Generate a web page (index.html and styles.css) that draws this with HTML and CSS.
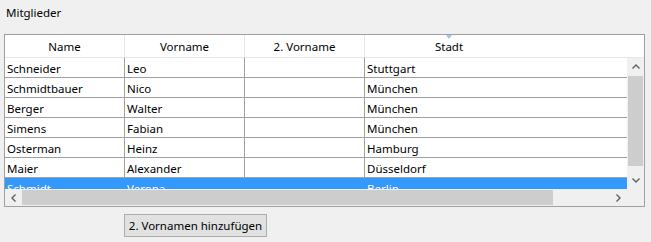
FILE: index.html
```html
<!DOCTYPE html>
<html lang="de">
<head>
    <meta charset="UTF-8">
    <title>Mitglieder</title>
    <link rel="stylesheet" href="styles.css">
</head>
<body>
    <div class="group">
        <div class="title">Mitglieder</div>
        <div class="grid-frame">
            <div class="header">
                <div class="hcell">Name</div>
                <div class="hcell">Vorname</div>
                <div class="hcell">2. Vorname</div>
                <div class="hcell last"><span class="sort-label"><span class="sort"></span>Stadt</span></div>
            </div>
            <div class="body-area">
                <div class="rows">
                    <div class="row"><div class="cell">Schneider</div><div class="cell">Leo</div><div class="cell"></div><div class="cell last">Stuttgart</div></div>
                    <div class="row"><div class="cell">Schmidtbauer</div><div class="cell">Nico</div><div class="cell"></div><div class="cell last">München</div></div>
                    <div class="row"><div class="cell">Berger</div><div class="cell">Walter</div><div class="cell"></div><div class="cell last">München</div></div>
                    <div class="row"><div class="cell">Simens</div><div class="cell">Fabian</div><div class="cell"></div><div class="cell last">München</div></div>
                    <div class="row"><div class="cell">Osterman</div><div class="cell">Heinz</div><div class="cell"></div><div class="cell last">Hamburg</div></div>
                    <div class="row"><div class="cell">Maier</div><div class="cell">Alexander</div><div class="cell"></div><div class="cell last">Düsseldorf</div></div>
                    <div class="row selected"><div class="cell">Schmidt</div><div class="cell">Verona</div><div class="cell"></div><div class="cell last">Berlin</div></div>
                </div>
                <div class="vscroll">
                    <div class="arrow-v">
                        <svg width="8" height="5" viewBox="0 0 8 5"><path d="M0.5 4.5 L4 1 L7.5 4.5" fill="none" stroke="#606060" stroke-width="1.4"/></svg>
                    </div>
                    <div class="vthumb"></div>
                    <div class="vspace"></div>
                    <div class="arrow-v">
                        <svg width="8" height="5" viewBox="0 0 8 5"><path d="M0.5 0.5 L4 4 L7.5 0.5" fill="none" stroke="#606060" stroke-width="1.4"/></svg>
                    </div>
                </div>
            </div>
            <div class="hbar">
                <div class="hscroll">
                    <div class="arrow-h">
                        <svg width="5" height="8" viewBox="0 0 5 8"><path d="M4.5 0.5 L1 4 L4.5 7.5" fill="none" stroke="#606060" stroke-width="1.4"/></svg>
                    </div>
                    <div class="hthumb"></div>
                    <div class="hspace"></div>
                    <div class="arrow-h">
                        <svg width="5" height="8" viewBox="0 0 5 8"><path d="M0.5 0.5 L4 4 L0.5 7.5" fill="none" stroke="#606060" stroke-width="1.4"/></svg>
                    </div>
                </div>
                <div class="corner"></div>
            </div>
        </div>
        <div class="actions">
            <button class="add-btn">2. Vornamen hinzufügen</button>
        </div>
    </div>
</body>
</html>
```

FILE: styles.css
```css
body {
    margin: 0;
    background-color: #f0f0f0;
    font-family: "Noto Sans", "Open Sans", sans-serif;
    font-size: 11.5px;
    color: #000;
}
.group {
    width: 651px;
    height: 242px;
}
.title {
    height: 34px;
    box-sizing: border-box;
    padding: 5px 6px 0;
    line-height: 16px;
}
.grid-frame {
    margin-left: 4px;
    width: 641px;
    height: 173px;
    box-sizing: border-box;
    border: 1px solid #a0a0a0;
    background-color: #fff;
    display: flex;
    flex-direction: column;
}
.header {
    display: flex;
    height: 23px;
    border-bottom: 1px solid #e5e5e5;
    box-sizing: border-box;
}
.hcell {
    width: 120px;
    box-sizing: border-box;
    border-right: 1px solid #e5e5e5;
    text-align: center;
    line-height: 23px;
}
.hcell.last {
    flex: 1;
    border-right: none;
    text-align: left;
}
.sort-label {
    display: inline-block;
    width: 168px;
    text-align: center;
    position: relative;
}
.sort {
    position: absolute;
    left: 81px;
    top: 0;
    width: 0;
    height: 0;
    border-left: 3.5px solid transparent;
    border-right: 3.5px solid transparent;
    border-top: 4px solid #a8c6e4;
}
.body-area {
    display: flex;
    height: 131px;
}
.rows {
    width: 622px;
    overflow: hidden;
}
.row {
    display: flex;
    height: 20px;
    box-sizing: border-box;
    border-bottom: 1px solid #a0a0a0;
}
.cell {
    width: 120px;
    box-sizing: border-box;
    border-right: 1px solid #a0a0a0;
    padding: 2px 0 0 2px;
    line-height: 18px;
    white-space: nowrap;
}
.cell.last {
    flex: 1;
    border-right: none;
}
.row.selected {
    background-color: #3399ff;
    color: #fff;
    border-bottom: none;
}
.row.selected .cell {
    border-right: none;
}
.vscroll {
    width: 17px;
    background-color: #f0f0f0;
    display: flex;
    flex-direction: column;
}
.arrow-v {
    height: 17px;
    display: flex;
    align-items: center;
    justify-content: center;
}
.vthumb {
    height: 90px;
    margin: 1px 1px 0;
    background-color: #cdcdcd;
}
.vspace {
    flex: 1;
}
.hbar {
    display: flex;
    height: 17px;
}
.hscroll {
    width: 622px;
    background-color: #f0f0f0;
    display: flex;
}
.arrow-h {
    width: 17px;
    display: flex;
    align-items: center;
    justify-content: center;
}
.hthumb {
    width: 531px;
    margin: 1px 0;
    background-color: #cdcdcd;
}
.hspace {
    flex: 1;
}
.corner {
    flex: 1;
    background-color: #f0f0f0;
}
.actions {
    padding: 7px 0 0 124px;
}
.add-btn {
    width: 143px;
    height: 23px;
    box-sizing: border-box;
    border: 1px solid #adadad;
    background-color: #e1e1e1;
    font-family: "Noto Sans", "Open Sans", sans-serif;
    font-size: 11.5px;
    color: #000;
    padding: 0;
}
```
